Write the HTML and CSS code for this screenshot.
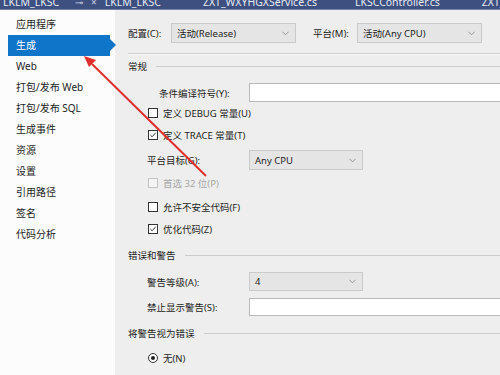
FILE: index.html
```html
<!DOCTYPE html>
<html lang="zh-CN">
<head>
    <meta charset="UTF-8">
    <title>项目属性 - 生成</title>
    <link rel="stylesheet" href="styles.css">
</head>
<body>
    <!-- document tabs, mostly scrolled out of view -->
    <div class="tabs">
        <div class="tab-row">
            <span class="tab tab-first">LKLM_LKSC</span>
            <span class="tab-icon tab-pin">⊸</span>
            <span class="tab-icon tab-close">×</span>
            <span class="tab tab-second">LKLM_LKSC</span>
            <span class="tab tab-third">ZXT_WXYHGXService.cs</span>
            <span class="tab tab-fourth">LKSCController.cs</span>
            <span class="tab tab-fifth">ZXT_WXYHGX</span>
        </div>
    </div>

    <div class="page">
        <!-- property page list -->
        <ul class="sidebar">
            <li class="nav-item">应用程序</li>
            <li class="nav-item active">生成</li>
            <li class="nav-item">Web</li>
            <li class="nav-item">打包/发布 Web</li>
            <li class="nav-item">打包/发布 SQL</li>
            <li class="nav-item">生成事件</li>
            <li class="nav-item">资源</li>
            <li class="nav-item">设置</li>
            <li class="nav-item">引用路径</li>
            <li class="nav-item">签名</li>
            <li class="nav-item">代码分析</li>
        </ul>

        <div class="main">
            <div class="cfg-row">
                <span class="cfg-label">配置(C):</span>
                <div class="select cfg-select">
                    <span>活动(Release)</span>
                    <svg class="chev" viewBox="0 0 8 5"><polyline points="0.5,0.5 4,4 7.5,0.5"/></svg>
                </div>
                <span class="cfg-label cfg-label-2">平台(M):</span>
                <div class="select cfg-select">
                    <span>活动(Any CPU)</span>
                    <svg class="chev" viewBox="0 0 8 5"><polyline points="0.5,0.5 4,4 7.5,0.5"/></svg>
                </div>
            </div>

            <div class="separator"></div>

            <div class="group-head head-general"><span>常规</span><div class="rule"></div></div>

            <div class="field field-symbols">
                <span class="field-label label-symbols">条件编译符号(Y):</span>
                <div class="textbox"></div>
            </div>

            <div class="check"><span class="box"></span><span>定义 DEBUG 常量(U)</span></div>
            <div class="check"><span class="box checked"><svg viewBox="0 0 9 9"><polyline points="1.5,4.5 3.5,6.5 7.5,2"/></svg></span><span>定义 TRACE 常量(T)</span></div>

            <div class="field field-target">
                <span class="field-label">平台目标(G):</span>
                <div class="select target-select">
                    <span>Any CPU</span>
                    <svg class="chev" viewBox="0 0 8 5"><polyline points="0.5,0.5 4,4 7.5,0.5"/></svg>
                </div>
            </div>

            <div class="check disabled check-prefer"><span class="box"></span><span>首选 32 位(P)</span></div>
            <div class="check check-unsafe"><span class="box"></span><span>允许不安全代码(F)</span></div>
            <div class="check"><span class="box checked"><svg viewBox="0 0 9 9"><polyline points="1.5,4.5 3.5,6.5 7.5,2"/></svg></span><span>优化代码(Z)</span></div>

            <div class="group-head head-errors"><span>错误和警告</span><div class="rule"></div></div>

            <div class="field field-level">
                <span class="field-label">警告等级(A):</span>
                <div class="select level-select">
                    <span>4</span>
                    <svg class="chev" viewBox="0 0 8 5"><polyline points="0.5,0.5 4,4 7.5,0.5"/></svg>
                </div>
            </div>

            <div class="field field-suppress">
                <span class="field-label">禁止显示警告(S):</span>
                <div class="textbox textbox-short"></div>
            </div>

            <div class="group-head head-treat"><span>将警告视为错误</span><div class="rule"></div></div>

            <div class="check radio-row"><span class="radio"></span><span>无(N)</span></div>
        </div>
    </div>

    <!-- red annotation arrow -->
    <svg class="annotation" width="500" height="375" viewBox="0 0 500 375">
        <line x1="206" y1="176" x2="92" y2="64" />
        <polygon points="84,56 96,60 89,67" />
    </svg>
</body>
</html>
```

FILE: styles.css
```css
* {
    margin: 0;
    padding: 0;
    box-sizing: border-box;
}

body {
    width: 500px;
    height: 375px;
    overflow: hidden;
    position: relative;
    background: #eeeeee;
    color: #1e1e1e;
    font-family: 'Noto Sans', 'Noto Sans CJK SC', sans-serif;
    font-size: 9.5px;
}

/* Tabs */
.tabs {
    height: 10px;
    overflow: hidden;
    background: #3d5080;
    border-bottom: 1px solid #7383a8;
}

.tab-row {
    display: flex;
    margin-top: -5px;
    line-height: 14px;
    font-size: 10.5px;
    color: #e4e9f3;
    white-space: nowrap;
}

.tab-first { margin-left: 3px; }
.tab-icon { font-size: 10px; color: #c8d0e4; }
.tab-pin { margin-left: 16px; }
.tab-close { margin-left: 8px; }
.tab-second { margin-left: 8px; }
.tab-third { margin-left: 42px; }
.tab-fourth { margin-left: 38px; }
.tab-fifth { margin-left: 42px; }

/* Layout */
.page {
    display: flex;
    height: 365px;
}

.sidebar {
    list-style: none;
    width: 115px;
    flex-shrink: 0;
    background: #fcfcfc;
    padding-top: 4px;
}

.nav-item {
    height: 21px;
    line-height: 21px;
    margin-left: 8px;
    width: 102px;
    padding-left: 8px;
    font-size: 10px;
    color: #1e1e1e;
    position: relative;
}

.nav-item.active {
    background: #0f75c9;
    color: #ffffff;
}

.nav-item.active::after {
    content: '';
    position: absolute;
    left: 102px;
    top: 4px;
    border-top: 6.5px solid transparent;
    border-bottom: 6.5px solid transparent;
    border-left: 6px solid #0f75c9;
}

.main {
    flex: 1;
    padding: 13px 0 0 13px;
    overflow: hidden;
}

/* Config row */
.cfg-row {
    display: flex;
    align-items: center;
    height: 20px;
}

.cfg-label {
    width: 43px;
}

.cfg-label-2 {
    margin-left: 17px;
    width: 44px;
}

.select {
    display: flex;
    align-items: center;
    justify-content: space-between;
    flex-shrink: 0;
    height: 20px;
    padding: 0 6px 0 5px;
    background: #e5e5e5;
    border: 1px solid #cacaca;
}

.cfg-select {
    width: 125px;
}

.chev {
    width: 7px;
    height: 5px;
    fill: none;
    stroke: #8a8a8a;
    stroke-width: 1;
}

.separator {
    margin-top: 10px;
    height: 2px;
    border-top: 1px solid #cfcfcf;
    border-bottom: 1px solid #f8f8f8;
}

/* Group headers */
.group-head {
    display: flex;
    align-items: center;
    height: 12px;
}

.group-head .rule {
    flex: 1;
    height: 1px;
    margin-left: 9px;
    background: #cccccc;
}

.head-general { margin-top: 5px; }
.head-errors { margin-top: 9px; }
.head-treat { margin-top: 11px; }

/* Fields */
.field {
    display: flex;
    align-items: center;
}

.field-label {
    width: 121px;
    flex-shrink: 0;
    padding-left: 19px;
}

.label-symbols {
    padding-left: 31px;
}

.textbox {
    width: 260px;
    flex-shrink: 0;
    height: 19px;
    background: #ffffff;
    border: 1px solid #b9b9b9;
}

.textbox-short {
    height: 18px;
}

.field-symbols { margin-top: 11px; }
.field-target { margin-top: 4px; }
.field-level { margin-top: 11px; }
.field-suppress { margin-top: 7px; }

.target-select,
.level-select {
    width: 114px;
}

.level-select {
    height: 19px;
}

/* Checkboxes */
.check {
    display: flex;
    align-items: center;
    height: 22px;
    padding-left: 20px;
}

.box {
    width: 10px;
    height: 10px;
    margin-right: 5px;
    background: #ffffff;
    border: 1px solid #333333;
}

.box svg {
    display: block;
    width: 8px;
    height: 8px;
    fill: none;
    stroke: #333333;
    stroke-width: 1.1;
}

.check.disabled {
    color: #a6a6a6;
}

.check.disabled .box {
    border-color: #c4c4c4;
    background: #f4f4f4;
}

.check-prefer { margin-top: 2px; }
.check-unsafe { margin-top: 2px; }

.radio-row { margin-top: 8px; }

.radio {
    width: 10px;
    height: 10px;
    margin-right: 5px;
    border: 1px solid #333333;
    border-radius: 50%;
    background: #ffffff;
    display: flex;
    align-items: center;
    justify-content: center;
}

.radio::after {
    content: '';
    width: 4px;
    height: 4px;
    border-radius: 50%;
    background: #222222;
}

/* Annotation */
.annotation {
    position: absolute;
    left: 0;
    top: 0;
    pointer-events: none;
}

.annotation line {
    stroke: #e0302e;
    stroke-width: 2;
}

.annotation polygon {
    fill: #e0302e;
}
```
